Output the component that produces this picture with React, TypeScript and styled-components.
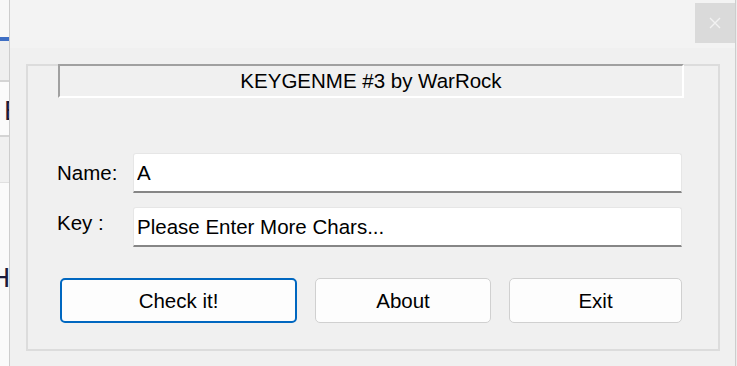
import styled, { createGlobalStyle } from "styled-components";

const GlobalStyle = createGlobalStyle`
  html, body {
    margin: 0;
    padding: 0;
    background: #fafafa;
    font-family: "Liberation Sans", Arial, sans-serif;
  }
`;

export default function App() {
  return (
    <>
      <GlobalStyle />
      <Screen>
        <Backdrop>
          <Strip $h={37} $bg="#f8f8f8" />
          <Strip $h={4} $bg="#3f6fc4" />
          <Strip $h={39} $bg="#efefef" />
          <Strip $h={2} $bg="#d4d4d4" />
          <Strip $h={53} $bg="#fbfbfb">
            <BackGlyph $indent={4} $top={14}>E</BackGlyph>
          </Strip>
          <Strip $h={2} $bg="#d4d4d4" />
          <Strip $h={45} $bg="#f0f0f0" />
          <Strip $h={1} $bg="#e0e0e0" />
          <Strip $h={183} $bg="#fafafa">
            <BackGlyph $indent={-10} $top={80}>H</BackGlyph>
          </Strip>
        </Backdrop>

        <Window>
          <TitleBar>
            <CloseButton aria-label="close">
              <svg width="12" height="12" viewBox="0 0 12 12">
                <path d="M1 1 L11 11 M11 1 L1 11" stroke="#f2f2f2" strokeWidth="1.3" />
              </svg>
            </CloseButton>
          </TitleBar>

          <Client>
            <GroupBox>
              <Banner>KEYGENME #3 by WarRock</Banner>

              <Fields>
                <FieldRow>
                  <FieldLabel>Name:</FieldLabel>
                  <TextBox readOnly value="A" />
                </FieldRow>
                <FieldRow>
                  <FieldLabel $lift={4}>Key :</FieldLabel>
                  <TextBox readOnly value="Please Enter More Chars..." />
                </FieldRow>
              </Fields>

              <Buttons>
                <PushButton $w={237} $primary>Check it!</PushButton>
                <PushButton $w={176}>About</PushButton>
                <PushButton $w={173}>Exit</PushButton>
              </Buttons>
            </GroupBox>
          </Client>
        </Window>

        <RightEdge />
      </Screen>
    </>
  );
}

const Screen = styled.div`
  display: flex;
  width: 737px;
  height: 366px;
  overflow: hidden;
`;

const Backdrop = styled.div`
  width: 9px;
  display: flex;
  flex-direction: column;
  overflow: hidden;
`;

const Strip = styled.div<{ $h: number; $bg: string }>`
  height: ${(p) => p.$h}px;
  flex-shrink: 0;
  background: ${(p) => p.$bg};
  overflow: hidden;
`;

const BackGlyph = styled.div<{ $indent: number; $top: number }>`
  margin: ${(p) => p.$top}px 0 0 ${(p) => p.$indent}px;
  font-size: 28px;
  line-height: 30px;
  color: #1b1b3a;
  white-space: nowrap;
`;

const Window = styled.div`
  width: 725px;
  border-left: 1px solid #cdcdcd;
  border-right: 1px solid #cdcdcd;
  display: flex;
  flex-direction: column;
`;

const RightEdge = styled.div`
  flex: 1;
  background: #ececec;
`;

const TitleBar = styled.div`
  height: 48px;
  box-sizing: border-box;
  padding-top: 3px;
  background: #f3f3f3;
  display: flex;
  justify-content: flex-end;
  align-items: flex-start;
`;

const CloseButton = styled.div`
  width: 40px;
  height: 40px;
  background: #dadada;
  display: flex;
  align-items: center;
  justify-content: center;
`;

const Client = styled.div`
  flex: 1;
  background: #f0f0f0;
  padding: 16px 0 0 16px;
`;

const GroupBox = styled.div`
  width: 694px;
  height: 287px;
  box-sizing: border-box;
  border: 2px solid #dcdcdc;
  display: flex;
  flex-direction: column;
`;

const Banner = styled.div`
  margin: -2px 34px 0 30px;
  height: 34px;
  box-sizing: border-box;
  border-top: 2px solid #a0a0a0;
  border-left: 2px solid #a0a0a0;
  border-bottom: 2px solid #ffffff;
  border-right: 2px solid #ffffff;
  display: flex;
  align-items: center;
  justify-content: center;
  font-size: 20.5px;
  color: #000;
`;

const Fields = styled.div`
  margin: 55px 0 0 29px;
  display: flex;
  flex-direction: column;
  gap: 14px;
`;

const FieldRow = styled.div`
  display: flex;
  align-items: center;
`;

const FieldLabel = styled.span<{ $lift?: number }>`
  width: 76px;
  font-size: 20.5px;
  color: #000;
  margin-bottom: ${(p) => (p.$lift ?? 0) * 2}px;
`;

const TextBox = styled.input`
  width: 549px;
  height: 40px;
  box-sizing: border-box;
  margin: 0;
  padding: 0 0 0 3px;
  border: 1px solid #e6e6e6;
  border-bottom: 2px solid #868686;
  border-radius: 3px 3px 0 0;
  background: #ffffff;
  font-family: "Liberation Sans", Arial, sans-serif;
  font-size: 20.5px;
  color: #000;
  outline: none;
`;

const Buttons = styled.div`
  margin: 31px 0 0 32px;
  display: flex;
  gap: 18px;
`;

const PushButton = styled.div<{ $w: number; $primary?: boolean }>`
  width: ${(p) => p.$w}px;
  height: 45px;
  box-sizing: border-box;
  border: ${(p) => (p.$primary ? "2px solid #0067c0" : "1.5px solid #d0d0d0")};
  border-radius: 5px;
  background: #fdfdfd;
  display: flex;
  align-items: center;
  justify-content: center;
  font-size: 20.5px;
  color: #000;
`;
